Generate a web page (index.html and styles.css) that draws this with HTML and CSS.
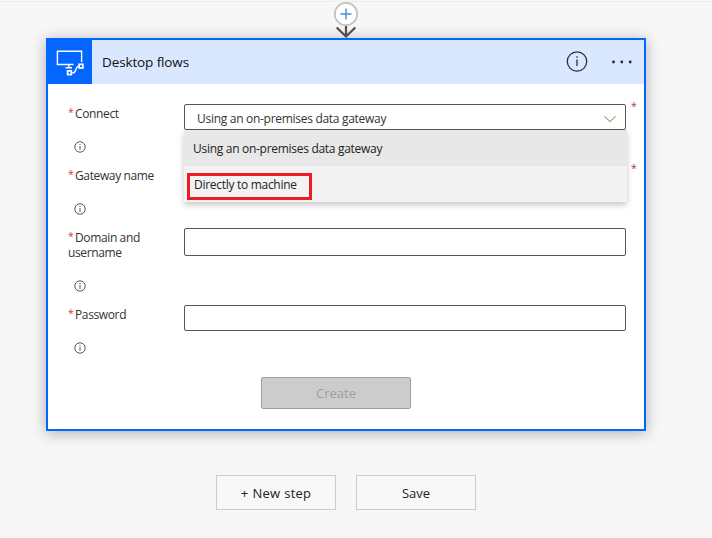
FILE: index.html
```html
<!DOCTYPE html>
<html lang="en">
<head>
<meta charset="utf-8">
<title>Desktop flows</title>
<link rel="stylesheet" href="styles.css">
</head>
<body>
<div class="connector">
  <svg width="28" height="38" viewBox="0 0 28 38">
    <circle cx="14" cy="13" r="11.2" fill="#fff" stroke="#c2c2c2" stroke-width="1.7"/>
    <path d="M14 7.500v11M8.500 13h11" stroke="#3d8fd8" stroke-width="1.4"/>
    <path d="M14 25v10.500M4.700 26.500l9.300 9 9.300-9" fill="none" stroke="#4e4e4e" stroke-width="2.200"/>
  </svg>
</div>
<main class="card">
  <header class="card-header">
    <div class="card-icon">
      <svg width="44" height="44" viewBox="0 0 44 44" fill="none" stroke="#fff" stroke-width="1.400">
        <path d="M25.500 24.500H9.400V11.200h24.200V22M20.800 24.500V28M17.500 27.800h6.500"/>
        <rect x="19.600" y="30.900" width="3.700" height="3.700" stroke-width="1.700"/>
        <rect x="31.200" y="24.300" width="3.700" height="3.700" stroke-width="1.700"/>
        <path d="M23.500 32.900h1.700c3 0 2.400-6.800 5.300-6.800h.7"/>
      </svg>
    </div>
    <h1 class="card-title">Desktop flows</h1>
    <svg class="header-info" width="22" height="22" viewBox="0 0 22 22">
      <circle cx="11" cy="10.500" r="9.700" fill="none" stroke="#2b3038" stroke-width="1.300"/>
      <path d="M11 8.500v6.500M11 5.300v1.500" stroke="#2b3038" stroke-width="1.300"/>
    </svg>
    <svg class="header-more" width="22" height="4" viewBox="0 0 22 4" fill="#252a33">
      <circle cx="2.500" cy="2" r="1.400"/><circle cx="10.800" cy="2" r="1.400"/><circle cx="19.200" cy="2" r="1.400"/>
    </svg>
  </header>
  <form class="form">
    <div class="row">
      <div class="label"><div class="name"><i>*</i>Connect</div>
        <svg class="info" viewBox="0 0 12 12"><circle cx="6" cy="6" r="5.200"/><path d="M6 5v3.800M6 3v1"/></svg></div>
      <div class="field select"><span class="select-text">Using an on-premises data gateway</span>
        <svg width="14" height="8" viewBox="0 0 14 8"><path d="M1.300 1.200L7 6.700l5.700-5.500" fill="none" stroke="#b6a07c" stroke-width="1.100"/></svg>
        <div class="menu">
          <div class="option selected"><span class="option-text">Using an on-premises data gateway</span></div>
          <div class="option"><span class="marked"><span class="marked-text">Directly to machine</span></span></div>
        </div>
      </div>
      <span class="required">*</span>
    </div>
    <div class="row">
      <div class="label"><div class="name"><i>*</i>Gateway name</div>
        <svg class="info" viewBox="0 0 12 12"><circle cx="6" cy="6" r="5.200"/><path d="M6 5v3.800M6 3v1"/></svg></div>
      <div class="field"></div>
      <span class="required">*</span>
    </div>
    <div class="row tall">
      <div class="label"><div class="name"><i>*</i>Domain and<br>username</div>
        <svg class="info" viewBox="0 0 12 12"><circle cx="6" cy="6" r="5.200"/><path d="M6 5v3.800M6 3v1"/></svg></div>
      <div class="field"></div>
    </div>
    <div class="row">
      <div class="label"><div class="name"><i>*</i>Password</div>
        <svg class="info" viewBox="0 0 12 12"><circle cx="6" cy="6" r="5.200"/><path d="M6 5v3.800M6 3v1"/></svg></div>
      <div class="field"></div>
    </div>
    <button class="create" type="button" disabled>Create</button>
  </form>
</main>
<div class="actions">
  <button type="button"><span class="new-step">+ New step</span></button>
  <button type="button"><span>Save</span></button>
</div>
</body>
</html>
```
FILE: styles.css
```css
* { box-sizing: border-box; }
body {
  margin: 0;
  height: 538px;
  overflow: hidden;
  background: #f7f7f7;
  border-top: 1px solid #f7f7f7;
  font-family: "Open Sans", "Noto Sans", sans-serif;
  font-size: 12px;
  letter-spacing: -.29px;
  color: #333;
  box-shadow: inset 0 1px #eee;
}
.connector {
  position: relative;
  z-index: 1;
  height: 37px;
  padding-left: 332px;
}
.connector svg { display: block; }
.card {
  width: 600px;
  height: 393px;
  margin-left: 46px;
  border: 2px solid #0366ff;
  background: #fff;
  box-shadow: 0 2px 14px rgba(0, 0, 0, .3);
}
.card-header {
  display: flex;
  align-items: center;
  height: 44px;
  background: #d9e7ff;
}
.card-icon { width: 44px; height: 44px; background: #0366ff; }
.card-icon svg { display: block; }
.card-title {
  flex: 1;
  margin: 0 0 0 10px;
  font-size: 13.500px;
  font-weight: 400;
  letter-spacing: -.12px;
  color: #111;
}
.header-more { margin: 0 11px 0 23px; }
.form { display: flex; flex-direction: column; padding: 20px 5px 0 20px; }
.row { display: flex; height: 62px; }
.row.tall { height: 77px; }
.label { flex: none; width: 116px; }
.name { margin-top: 2px; line-height: 15px; letter-spacing: -.37px; }
.name i {
  display: inline-block;
  width: 7px;
  font-size: 10.500px;
  line-height: 12px;
  vertical-align: 2px;
  font-style: normal;
  color: #d8323c;
}
.info {
  display: block;
  width: 12px;
  height: 12px;
  margin: 20px 0 0 6px;
  fill: none;
  stroke: #444;
  stroke-width: .9;
}
.field {
  position: relative;
  flex: none;
  width: 442px;
  height: 26px;
  border: 1px solid #555;
  border-radius: 2px;
  background: #fff;
}
.tall .field { height: 28px; }
.select {
  display: flex;
  align-items: center;
  justify-content: space-between;
  padding: 3px 8px 0 12px;
}
.required {
  margin: -5px 0 0 5px;
  font-size: 10.500px;
  line-height: 14px;
  color: #a8324a;
}
.menu {
  position: absolute;
  z-index: 2;
  top: 25px;
  left: -1px;
  width: 443px;
  background: #f3f3f3;
  box-shadow: 0 3px 6px rgba(0, 0, 0, .22);
}
.option { display: flex; height: 36px; align-items: center; padding-left: 9px; color: #222; }
.option.selected { background: #e8e8e8; }
.option:last-child { padding: 4px 0 0 3px; }
.marked {
  display: flex;
  align-items: center;
  width: 125px;
  height: 27px;
  padding: 0 0 3px 4px;
  border: 3px solid #ed1c24;
}
.marked-text { white-space: nowrap; }
button { padding: 0; font-family: inherit; font-size: 13px; text-align: center; }
.create {
  width: 150px;
  height: 32px;
  margin: 10px 0 0 193px;
  border: 1px solid #a0a0a0;
  border-radius: 2px;
  background: #ccc;
  color: #a0a0a0;
}
.actions { display: flex; gap: 20px; margin: 44px 0 0 216px; }
.actions button {
  width: 120px;
  height: 35px;
  border: 1px solid #ccc;
  background: #f8f8f8;
  color: #222;
}
.new-step { letter-spacing: .2px; word-spacing: .5px; }
```
